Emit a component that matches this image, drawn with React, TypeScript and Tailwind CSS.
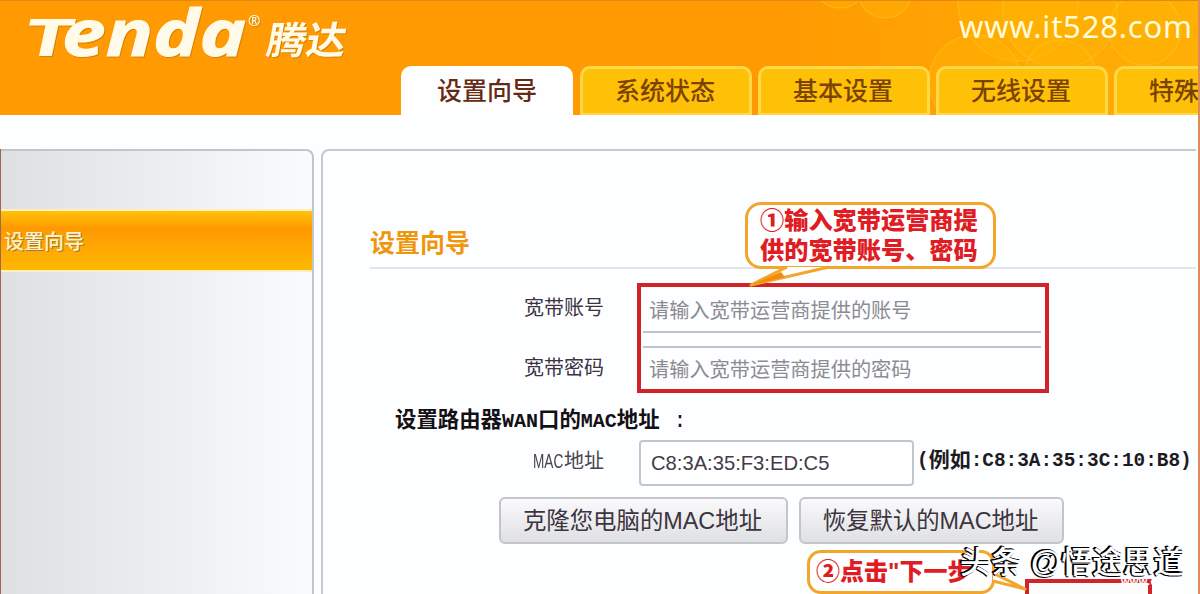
const tabs = ["设置向导", "系统状态", "基本设置", "无线设置", "特殊应用"];

const cjk = "font-['Liberation_Sans','Noto_Sans_CJK_SC',sans-serif]";

const Logo = () => (
  <svg
    width="360"
    height="70"
    viewBox="0 0 360 70"
    className="overflow-visible fill-[#fffbe8] drop-shadow-[1px_1px_0px_#d98200]"
  >
    <g fontFamily="'Open Sans', sans-serif" fontWeight="700">
      <text transform="translate(21 55) skewX(-12) scale(1.62 1)" fontSize="52">
        T
      </text>
      <text
        x="62"
        y="55"
        fontSize="64"
        fontStyle="italic"
        textLength="184"
        lengthAdjust="spacingAndGlyphs"
        className="stroke-[#fffbe8] stroke-1"
      >
        enda
      </text>
    </g>
    <text x="248" y="25" fontSize="15" fontWeight="600" fontFamily="'Noto Sans', sans-serif">
      ®
    </text>
    <text
      transform="translate(265 53) skewX(-10)"
      fontSize="38"
      fontWeight="700"
      textLength="79"
      lengthAdjust="spacingAndGlyphs"
      fontFamily="'Noto Sans CJK SC', sans-serif"
    >
      腾达
    </text>
  </svg>
);

const Bubbles = () => (
  <svg width="440" height="115" viewBox="0 0 440 115" className="absolute right-0 top-0">
    <g fill="#ffb800" fillOpacity="0.3" stroke="#ffca2a" strokeOpacity="0.4" strokeWidth="1.5">
      <circle cx="125" cy="-10" r="27" />
      <circle cx="80" cy="-20" r="27" />
      <circle cx="258" cy="0" r="60" />
      <circle cx="300" cy="10" r="57" />
      <circle cx="215" cy="80" r="46" />
      <circle cx="385" cy="28" r="36" />
      <circle cx="300" cy="75" r="36" />
    </g>
  </svg>
);

const Header = () => (
  <header className="relative flex h-[115px] flex-col overflow-hidden border-t border-[#e08a10] bg-linear-to-r from-[#ff9a02] from-65% to-[#ffaf06]">
    <Bubbles />
    <div className="relative flex h-[65px] shrink-0 justify-between">
      <Logo />
      <svg width="244" height="50" viewBox="0 0 244 50" className="fill-[#fffcd8]">
        <text x="3" y="37" fontSize="31" textLength="233" fontFamily="'Noto Sans', sans-serif">
          www.it528.com
        </text>
      </svg>
    </div>
    <nav className="relative ml-[401px] flex h-[49px] gap-1.5 whitespace-nowrap text-[25px] font-medium text-[#7a4300]">
      {tabs.map((tab, i) => (
        <div
          key={tab}
          className={
            i === 0
              ? "mr-px flex w-[172px] shrink-0 justify-center rounded-t-[10px] bg-[#fefefe] pt-[7px] text-[#662a14]"
              : "flex w-[172px] shrink-0 justify-center rounded-t-[10px] border-[3px] border-b-2 border-[#ffd84a] bg-[#ffc107] pr-0.5 pt-1"
          }
        >
          {tab}
        </div>
      ))}
    </nav>
  </header>
);

const Sidebar = () => (
  <aside className="mr-[7px] w-[313px] rounded-tr-lg border-r-2 border-t-2 border-[#c2c5c9] bg-linear-to-r from-[#dfe0e2] to-[#fafbfd] pt-[58px]">
    <div className="flex h-[63px] items-center border-y-2 border-[#fff0c0] bg-linear-to-b from-[#ffc20c] via-[#ff9800] via-30% to-[#ffb804] pl-[3px] pt-0.5 text-xl font-medium text-[#fff3c4] [text-shadow:1px_1px_0_#a87830]">
      设置向导
    </div>
  </aside>
);

const Form = () => (
  <main className="relative min-w-0 flex-1 rounded-tl-lg border-l-2 border-t-2 border-[#c6c9cd] pl-[48px] pt-[78px]">
    <h1 className="-ml-px flex h-[40px] items-start border-b-2 border-[#e2e5e9] text-[25px] font-bold leading-[29px] text-[#f0960c]">
      设置向导
    </h1>
    <div className="mt-[14px] flex">
      <div className="mr-[33px] w-[233px] text-right text-xl text-[#3c3444]">
        <div className="h-[60px] leading-[50px]">宽带账号</div>
        <div className="h-[50px] leading-[50px]">宽带密码</div>
      </div>
      <div className="h-[110px] w-[412px] border-4 border-[#d22328] pl-0.5 pr-1 text-[20.2px] text-[#8c8c90]">
        <div className="h-[46px] border-b-2 border-[#bfc2c6] pl-[6px] leading-[48px]">请输入宽带运营商提供的账号</div>
        <div className="mt-[13px] border-t-2 border-[#bfc2c6] pl-[6px] leading-[45px]">请输入宽带运营商提供的密码</div>
      </div>
    </div>
    <div className="ml-[24px] flex h-[47px] items-center whitespace-pre pt-2.5 font-['Liberation_Mono','Noto_Sans_CJK_SC',monospace] text-[21.4px] font-bold text-[#141014]">
      设置路由器<span className="text-xl">WAN</span>口的<span className="text-xl">MAC</span>地址
      <span className="ml-[14px] font-normal">:</span>
    </div>
    <div className="flex h-[46px] whitespace-nowrap">
      <div className="mr-[35px] flex w-[233px] items-center justify-end pb-1 text-xl text-[#4a4450]">
        <span className="mr-px inline-block w-[30px] origin-left scale-x-[0.68]">MAC</span>地址
      </div>
      <div className="flex w-[275px] items-center rounded-[4px] border-2 border-[#c3c6c9] bg-white pl-[10px] text-[20.2px] text-[#443a4a]">
        C8:3A:35:F3:ED:C5
      </div>
      <div className="ml-[3px] flex items-center pb-0.5 font-['Liberation_Mono','Noto_Sans_CJK_SC',monospace] text-[19.4px] font-bold text-[#1e1a22]">
        (<span className="text-[21px]">例如</span>:C8:3A:35:3C:10:B8)
      </div>
    </div>
    <div className="ml-[128px] mt-[11px] flex gap-[11px] whitespace-nowrap text-[23.4px] text-[#3c3440]">
      <div className="flex h-[47px] w-[289px] items-center justify-center rounded-md border-2 border-[#c3c5c9] bg-linear-to-b from-[#fafafc] to-[#dfe0e3] pr-0.5 pt-[3px]">
        克隆您电脑的MAC地址
      </div>
      <div className="flex h-[47px] w-[265px] items-center justify-center rounded-md border-2 border-[#c3c5c9] bg-linear-to-b from-[#fafafc] to-[#dfe0e3] pr-0.5 pt-[3px]">
        恢复默认的MAC地址
      </div>
    </div>
  </main>
);

const Callouts = () => (
  <div className="pointer-events-none absolute inset-0 overflow-hidden whitespace-nowrap font-black text-[#e01c24]">
    <div className="absolute left-[745px] top-[202px] h-[67px] w-[251px] rounded-[16px] border-[3px] border-[#f2a62c] bg-white pl-3 pt-px text-[24.2px] leading-[30px]">
      ①输入宽带运营商提
      <br />
      供的宽带账号、密码
    </div>
    <svg width="100" height="24" viewBox="0 0 100 24" className="absolute left-[745px] top-[264px]">
      <path d="M42 3 L6 21 L84 3" fill="#fff" stroke="#f2a62c" strokeWidth="3" strokeLinejoin="round" />
      <path d="M36 8 L6 21 L40 13 Z" fill="#f58a0a" />
    </svg>
    <div className="absolute left-[1025px] top-[579px] h-[40px] w-[127px] border-4 border-[#d22328] bg-[#fcfcfd]" />
    <div className="absolute left-[807px] top-[550px] h-[44px] w-[188px] rounded-[14px] border-[3px] border-[#f2a62c] bg-white pl-[6px] text-[24px] leading-[38px]">
      ②点击"下一步
    </div>
    <svg width="50" height="30" viewBox="0 0 50 30" className="absolute left-[985px] top-[564px]">
      <path d="M8 9 L40 25 L8 17" fill="#fff" stroke="#f2a62c" strokeWidth="3" strokeLinejoin="round" />
    </svg>
  </div>
);

const Watermark = () => (
  <>
    <div className="absolute left-[960px] top-[543px] whitespace-nowrap text-[30.8px] font-medium leading-[40px] text-white [text-shadow:-2px_-1px_0_#000,-1px_-1px_0_#000,-1px_1px_0_#000]">
      头条 @悟途思道
    </div>
    <div className="absolute left-[1121px] top-[575px] text-[11px] font-bold leading-3 tracking-wide text-white">www.d</div>
  </>
);

export default function App() {
  return (
    <div className={`relative flex h-[594px] w-[1200px] flex-col overflow-hidden bg-[#fcfeff] ${cjk}`}>
      <Header />
      <div className="mt-[34px] flex flex-1 border-l border-[#9c6b4a] pr-1">
        <Sidebar />
        <Form />
      </div>
      <Callouts />
      <Watermark />
      <div className="absolute right-0 top-0 h-full w-0.5 bg-[#e28a5a]" />
    </div>
  );
}
